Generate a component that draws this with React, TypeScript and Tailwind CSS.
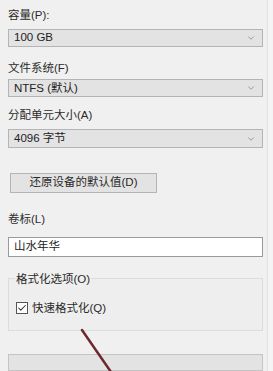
import { ChevronDown, Check } from "lucide-react";

const FONT = "font-['Liberation_Sans','Noto_Sans_CJK_SC',sans-serif]";

function Label({ text, className = "" }: { text: string; className?: string }) {
  return (
    <div className={`h-[14px] text-[11.5px] leading-[14px] text-[#2a2a2a] ${className}`}>
      {text}
    </div>
  );
}

function Select({ value, className = "" }: { value: string; className?: string }) {
  return (
    <div
      className={`flex h-[21px] w-[255px] items-center justify-between border border-[#b4b4b4] bg-[#e3e3e3] pl-[5px] pr-[6px] ${className}`}
    >
      <span className="text-[11.5px] leading-none text-[#222]">{value}</span>
      <ChevronDown className="h-[10px] w-[10px] text-[#8a8a8a]" strokeWidth={2} />
    </div>
  );
}

export default function App() {
  return (
    <div className={`relative flex h-[371px] w-[273px] overflow-hidden bg-[#f4f4f4] ${FONT}`}>
      <div className="flex w-[268px] flex-col border-r border-[#e2e2e2] bg-[#f0f0f0] pl-[8px]">
        <Label text="容量(P):" className="mt-[8px]" />
        <Select value="100 GB" className="mt-[7px]" />

        <Label text="文件系统(F)" className="mt-[14px]" />
        <Select value="NTFS (默认)" className="mt-[4px]" />

        <Label text="分配单元大小(A)" className="mt-[11px]" />
        <Select value="4096 字节" className="mt-[7px]" />

        <button className="mt-[25px] ml-[2px] flex h-[23px] w-[147px] items-center justify-center border border-[#b4b4b4] bg-[#e3e3e3] text-[11.5px] text-[#2a2a2a]">
          还原设备的默认值(D)
        </button>

        <Label text="卷标(L)" className="mt-[19px]" />
        <div className="mt-[11px] flex h-[23px] w-[255px] items-center border border-[#9a9a9a] bg-white pl-[5px] text-[11.5px] text-[#222]">
          山水年华
        </div>

        <fieldset className="mt-[15px] h-[69px] w-[255px] border border-[#dcdcdc] bg-[#eeeeee] px-[7px]">
          <legend className="ml-[-1px] px-[1px] text-[11.5px] leading-[14px] text-[#2a2a2a]">
            格式化选项(O)
          </legend>
          <div className="mt-[14px] flex items-center gap-[4px]">
            <span className="flex h-[12px] w-[12px] items-center justify-center border border-[#555] bg-white">
              <Check className="h-[10px] w-[10px] text-[#333]" strokeWidth={2.5} />
            </span>
            <span className="text-[11.5px] text-[#2a2a2a]">快速格式化(Q)</span>
          </div>
        </fieldset>

        <div className="mt-[23px] h-[20px] w-[255px] border border-[#c4c4c4] bg-[#e3e3e3]" />
      </div>

      {/* 红色标注线 */}
      <svg className="absolute left-0 top-0" width="273" height="371" viewBox="0 0 273 371">
        <line x1="82" y1="330" x2="111" y2="372" stroke="#6e2830" strokeWidth="2.5" strokeLinecap="round" />
      </svg>
    </div>
  );
}
